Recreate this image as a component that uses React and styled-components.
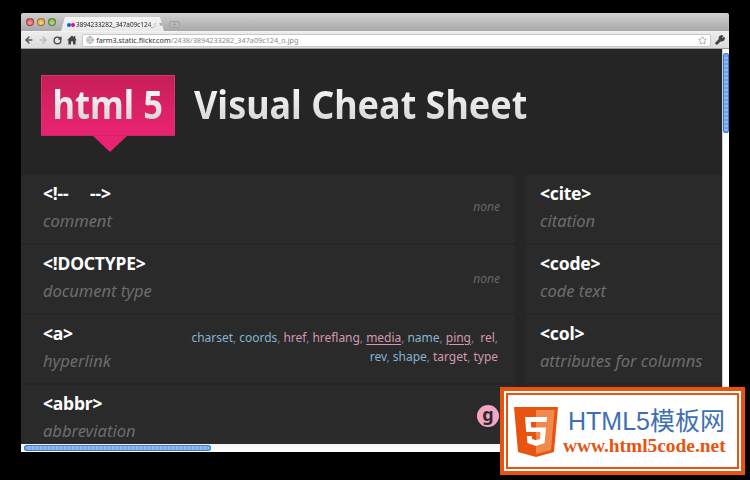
import React from "react";
import styled, { createGlobalStyle } from "styled-components";
import { ArrowLeft, ArrowRight, RotateCw, Star, Wrench, Globe, Plus } from "lucide-react";

const Global = createGlobalStyle`
  html, body { margin: 0; padding: 0; width: 750px; height: 480px; overflow: hidden; background: #000; }
  #root { width: 750px; height: 480px; }
`;

const Page = styled.div`
  position: relative;
  width: 750px;
  height: 480px;
  padding: 13px 21px 28px 21px;
  box-sizing: border-box;
  background: #000;
  font-family: "Noto Sans", "Open Sans", sans-serif;
`;
const Win = styled.div`
  width: 708px;
  height: 439px;
  display: flex;
  flex-direction: column;
  overflow: hidden;
  border-radius: 2px 2px 0 0;
`;
const TabStrip = styled.div`
  height: 18px;
  flex: none;
  display: flex;
  align-items: flex-end;
  padding-left: 5px;
  background: linear-gradient(#d0d0d0, #a9a9a9);
`;
const Lights = styled.div`
  display: flex;
  gap: 3px;
  align-self: center;
  margin-bottom: 1px;
`;
const Light = styled.span`
  width: 8px;
  height: 8px;
  border-radius: 50%;
  background: radial-gradient(circle at 50% 70%, ${(p) => p.$hi}, ${(p) => p.$c});
  border: 0.5px solid rgba(0, 0, 0, 0.35);
  box-sizing: border-box;
`;
const Tab = styled.div`
  width: 103px;
  height: 14px;
  margin-left: 5px;
  padding: 1px 6px 0 6px;
  box-sizing: border-box;
  display: flex;
  align-items: center;
  background: linear-gradient(#f4f4f4, #e9e9e9);
  clip-path: polygon(0 100%, 4px 0, 99px 0, 103px 100%);
  font-size: 6.4px;
  color: #222;
  white-space: nowrap;
  overflow: hidden;
`;
const Dot = styled.span`
  width: 4px;
  height: 4px;
  flex: none;
  border-radius: 50%;
  background: ${(p) => p.$c};
`;
const TabTitle = styled.span`
  margin-left: 1px;
  flex: 1;
  -webkit-mask-image: linear-gradient(90deg, #000 88%, transparent);
  mask-image: linear-gradient(90deg, #000 88%, transparent);
`;
const TabClose = styled.span`
  font-size: 7px;
  color: #777;
  margin-left: 1px;
`;
const NewTab = styled.div`
  width: 11px;
  height: 7px;
  margin: 0 0 3px 5px;
  display: flex;
  align-items: center;
  justify-content: center;
  background: #b8b8b8;
  border: 1px solid #a0a0a0;
  border-radius: 2px;
  color: #888;
  box-sizing: border-box;
`;
const Toolbar = styled.div`
  height: 18px;
  flex: none;
  display: flex;
  align-items: center;
  padding-left: 1px;
  box-sizing: border-box;
  background: linear-gradient(#ececec, #dcdcdc);
  border-top: 1px solid #f4f4f4;
  border-bottom: 1px solid #9c9c9c;
`;
const NavBtn = styled.span`
  width: 14.3px;
  flex: none;
  display: flex;
  justify-content: center;
  color: ${(p) => p.$c || "#555"};
`;
const Omni = styled.div`
  width: 629px;
  height: 13px;
  flex: none;
  margin: 0 2px 0 3px;
  padding: 0 3px 0 3px;
  box-sizing: border-box;
  display: flex;
  align-items: center;
  background: #fff;
  border: 1px solid #c8c8c8;
  border-radius: 2px;
  font-size: 7.25px;
  color: #8a8a8a;
  white-space: nowrap;
`;
const Host = styled.span`
  color: #333;
  margin-left: 2px;
`;
const Spacer = styled.span`
  flex: 1;
`;
const Body = styled.div`
  flex: 1;
  min-height: 0;
  display: grid;
  grid-template-columns: 701px 7px;
  grid-template-rows: 395px 8px;
`;
const Content = styled.div`
  overflow: hidden;
  background: #252525;
`;
const Header = styled.header`
  height: 126px;
  display: flex;
  align-items: flex-start;
  padding: 26px 0 0 20px;
  box-sizing: border-box;
`;
const Logo = styled.div`
  position: relative;
  width: 134px;
  height: 61px;
  flex: none;
  display: flex;
  align-items: center;
  justify-content: center;
  box-sizing: border-box;
  border: 1px solid #d4386f;
  border-bottom-color: #c72a62;
  background: linear-gradient(#c71f58, #e92372);
  &::after {
    content: "";
    position: absolute;
    left: 51px;
    top: 60px;
    border-style: solid;
    border-width: 16px 17px 0 17px;
    border-color: #e92372 transparent transparent transparent;
  }
`;
const GradientText = styled.span`
  font-family: "Noto Sans", "Open Sans", sans-serif;
  font-weight: 700;
  background: linear-gradient(#ffffff, #cfcfcf);
  -webkit-background-clip: text;
  background-clip: text;
  color: transparent;
  white-space: nowrap;
`;
const LogoText = styled(GradientText)`
  font-size: 40px;
  line-height: 46px;
  margin-top: -3px;
  transform: scaleX(0.865);
`;
const Title = styled(GradientText)`
  margin: 2px 0 0 19px;
  font-size: 40px;
  line-height: 54px;
  transform: scaleX(0.899);
  transform-origin: left center;
`;
const Grid = styled.div`
  display: grid;
  grid-template-columns: 494px 196px;
  column-gap: 11px;
  align-items: start;
`;
const Col = styled.div`
  display: flex;
  flex-direction: column;
  gap: 2px;
`;
const Row = styled.div`
  position: relative;
  height: 68px;
  box-sizing: border-box;
  padding: 6px 15px 0 ${(p) => (p.$right ? 14 : 22)}px;
  background: #2a2a2a;
  display: flex;
  justify-content: space-between;
`;
const Names = styled.div`
  display: flex;
  flex-direction: column;
`;
const Tag = styled.div`
  font-size: 17.5px;
  line-height: 24px;
  font-weight: 700;
  color: #fff;
  white-space: pre;
  letter-spacing: -0.2px;
`;
const Desc = styled.div`
  font-size: 16.5px;
  line-height: 24px;
  margin-top: 4px;
  font-style: italic;
  color: #6d6d6d;
  white-space: nowrap;
`;
const None = styled.div`
  align-self: flex-start;
  margin-top: ${(p) => p.$top}px;
  font-size: 12px;
  line-height: 16px;
  font-style: italic;
  color: #666;
`;
const Attrs = styled.div`
  width: 320px;
  margin: 7px 2px 0 0;
  text-align: right;
  font-size: 12px;
  line-height: 19px;
  letter-spacing: -0.03px;
  color: #6a7f8e;
`;
const Attr = styled.span`
  color: ${(p) => (p.$new ? "#d398b0" : "#86b4d2")};
  ${(p) => p.$u && "text-decoration: underline; text-underline-offset: 2px;"}
`;
const Badge = styled.div`
  position: absolute;
  right: 16px;
  top: 20px;
  width: 22px;
  height: 22px;
  border-radius: 50%;
  background: #f2a6c4;
  color: #2a2a2a;
  font-size: 18px;
  font-weight: 700;
  line-height: 19px;
  text-align: center;
`;
const VTrack = styled.div`
  background: #fff;
  border-left: 1px solid #cfcfcf;
  box-sizing: border-box;
  padding-top: 4px;
`;
const VThumb = styled.div`
  width: 6px;
  height: 80px;
  border-radius: 3px;
  background: repeating-linear-gradient(#8ab8f2 0 2px, #6fa2ea 2px 4px);
  box-shadow: inset 0 0 0 1px #3f78cf;
`;
const HTrack = styled.div`
  grid-column: 1 / span 2;
  background: linear-gradient(#f4f4f4, #ffffff);
  padding: 1px 0 0 3px;
  box-sizing: border-box;
`;
const HThumb = styled.div`
  width: 187px;
  height: 6px;
  border-radius: 3px;
  background: repeating-linear-gradient(90deg, #8ab8f2 0 2px, #7aaaf0 2px 4px);
  box-shadow: inset 0 0 0 1px #3f78cf;
`;
const Stamp = styled.aside`
  position: absolute;
  left: 500px;
  top: 387px;
  width: 245px;
  height: 88px;
  box-sizing: border-box;
  border: 4px solid #e8540f;
  background: #fff;
  padding: 2px;
`;
const StampInner = styled.div`
  height: 100%;
  box-sizing: border-box;
  border: 2px solid #e8540f;
  background: #fff;
  display: flex;
  align-items: center;
  padding: 1px 0 0 6px;
`;
const StampText = styled.div`
  margin-left: 5px;
  display: flex;
  flex-direction: column;
`;
const StampCn = styled.div`
  margin-left: 5px;
  font-family: "Liberation Sans", "Noto Sans CJK SC", sans-serif;
  font-size: 25px;
  line-height: 28px;
  color: #3f6fb3;
  white-space: nowrap;
`;
const StampUrl = styled.div`
  font-family: "Liberation Serif", serif;
  font-weight: 700;
  font-size: 19.4px;
  line-height: 21px;
  color: #e8540f;
  white-space: nowrap;
`;

const A = ({ n, u, children }) => (
  <Attr $new={n} $u={u}>
    {children}
  </Attr>
);

const leftRows = [
  { tag: "<!--     -->", desc: "comment", none: 18 },
  { tag: "<!DOCTYPE>", desc: "document type", none: 20 },
  { tag: "<a>", desc: "hyperlink", attrs: true },
  { tag: "<abbr>", desc: "abbreviation", badge: true },
];
const rightRows = [
  { tag: "<cite>", desc: "citation" },
  { tag: "<code>", desc: "code text" },
  { tag: "<col>", desc: "attributes for columns" },
  { tag: "", desc: "" },
];

export default function App() {
  return (
    <Page>
      <Global />
      <Win>
        <TabStrip>
          <Lights>
            <Light $c="#d9423c" $hi="#f7a49c" />
            <Light $c="#dd9a2a" $hi="#f8d68e" />
            <Light $c="#6cab3a" $hi="#b9e08c" />
          </Lights>
          <Tab>
            <Dot $c="#0063dc" />
            <Dot $c="#ff0084" />
            <TabTitle>3894233282_347a09c124_o</TabTitle>
            <TabClose>×</TabClose>
          </Tab>
          <NewTab>
            <Plus size={5} strokeWidth={2} />
          </NewTab>
        </TabStrip>
        <Toolbar>
          <NavBtn>
            <ArrowLeft size={10} strokeWidth={3.5} />
          </NavBtn>
          <NavBtn $c="#bbb">
            <ArrowRight size={10} strokeWidth={3.5} />
          </NavBtn>
          <NavBtn $c="#444">
            <RotateCw size={9} strokeWidth={3.5} />
          </NavBtn>
          <NavBtn $c="#444">
            <svg width="10" height="10" viewBox="0 0 10 10" fill="currentColor">
              <path d="M5 .5L7 2.3V1H8.3V3.5L10 5.2H8.6V9.6H6V6.5H4V9.6H1.4V5.2H0Z" />
            </svg>
          </NavBtn>
          <Omni>
            <Globe size={8} strokeWidth={1.5} color="#777" />
            <Host>farm3.static.flickr.com</Host>
            /2438/3894233282_347a09c124_o.jpg
            <Spacer />
            <Star size={9} strokeWidth={1.5} color="#777" />
          </Omni>
          <NavBtn $c="#444">
            <Wrench size={10} strokeWidth={3} fill="#444" />
          </NavBtn>
        </Toolbar>
        <Body>
          <Content>
            <Header>
              <Logo>
                <LogoText>html 5</LogoText>
              </Logo>
              <Title>Visual Cheat Sheet</Title>
            </Header>
            <Grid>
              <Col>
                {leftRows.map((r) => (
                  <Row key={r.desc}>
                    <Names>
                      <Tag>{r.tag}</Tag>
                      <Desc>{r.desc}</Desc>
                    </Names>
                    {r.none && <None $top={r.none}>none</None>}
                    {r.attrs && (
                      <Attrs>
                        <A>charset</A>, <A>coords</A>, <A n>href</A>, <A n>hreflang</A>,{" "}
                        <A n u>media</A>, <A>name</A>, <A n u>ping</A>,{"\u00a0 "}
                        <A n>rel</A>,
                        <br />
                        <A>rev</A>, <A>shape</A>, <A n>target</A>, <A n>type</A>
                      </Attrs>
                    )}
                    {r.badge && <Badge>g</Badge>}
                  </Row>
                ))}
              </Col>
              <Col>
                {rightRows.map((r, i) => (
                  <Row key={i} $right>
                    <Names>
                      <Tag>{r.tag}</Tag>
                      <Desc>{r.desc}</Desc>
                    </Names>
                  </Row>
                ))}
              </Col>
            </Grid>
          </Content>
          <VTrack>
            <VThumb />
          </VTrack>
          <HTrack>
            <HThumb />
          </HTrack>
        </Body>
      </Win>
      <Stamp>
        <StampInner>
          <svg width="44" height="50" viewBox="0 0 44 50">
            <path d="M0 0H44L40 45L22 50L4 45Z" fill="#e8540f" />
            <path d="M22 3H40.5L37 43L22 47Z" fill="#f28a4e" />
            <path
              d="M33 10H11L12.2 25H26.5L26 32L22 33.2L18 32L17.7 29H12.8L13.4 36L22 39L30.6 36L32 20.5H17.2L16.8 15H32.5Z"
              fill="#fff"
            />
          </svg>
          <StampText>
            <StampCn>HTML5模板网</StampCn>
            <StampUrl>www.html5code.net</StampUrl>
          </StampText>
        </StampInner>
      </Stamp>
    </Page>
  );
}
